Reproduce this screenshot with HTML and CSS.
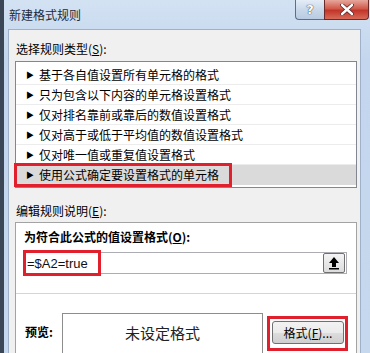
FILE: index.html
```html
<!DOCTYPE html>
<html lang="zh-CN">
<head>
    <meta charset="UTF-8">
    <title>新建格式规则</title>
    <link rel="stylesheet" href="styles.css">
</head>
<body>
    <div class="window">
        <div class="titlebar">
            <span class="title">新建格式规则</span>
            <div class="caption-btns">
                <span class="cap-btn help">?</span>
                <span class="cap-btn close">
                    <svg width="14" height="11" viewBox="0 0 14 11">
                        <path d="M2 1 L12 10 M12 1 L2 10" stroke="#5a2020" stroke-width="4" stroke-linecap="round"/>
                        <path d="M2 1 L12 10 M12 1 L2 10" stroke="#ffffff" stroke-width="2.4" stroke-linecap="round"/>
                    </svg>
                </span>
            </div>
        </div>
        <div class="client">
            <div class="label">选择规则类型(<u>S</u>):</div>
            <ul class="rule-list">
                <li class="rule">基于各自值设置所有单元格的格式</li>
                <li class="rule">只为包含以下内容的单元格设置格式</li>
                <li class="rule">仅对排名靠前或靠后的数值设置格式</li>
                <li class="rule">仅对高于或低于平均值的数值设置格式</li>
                <li class="rule">仅对唯一值或重复值设置格式</li>
                <li class="rule selected">使用公式确定要设置格式的单元格<span class="mark mark-row"></span></li>
            </ul>
            <div class="label label-edit">编辑规则说明(<u>E</u>):</div>
            <div class="desc">
                <div class="desc-title">为符合此公式的值设置格式(<u>O</u>):</div>
                <div class="formula">
                    <span class="formula-text">=$A2=true</span>
                    <span class="mark mark-formula"></span>
                    <span class="collapse-btn">
                        <svg width="12" height="14" viewBox="0 0 12 14">
                            <path d="M6 1 L11 7 L8 7 L8 11 L4 11 L4 7 L1 7 Z" fill="#000"/>
                            <rect x="1" y="12" width="10" height="1.5" fill="#000"/>
                        </svg>
                    </span>
                </div>
                <div class="sep"></div>
                <div class="preview-row">
                    <span class="preview-label">预览:</span>
                    <div class="preview">未设定格式</div>
                    <div class="btn-mark">
                        <button class="btn">格式(<u>F</u>)...</button>
                    </div>
                </div>
            </div>
        </div>
    </div>
</body>
</html>
```

FILE: styles.css
```css
body {
    margin: 0;
    background: #3b4656;
    font-family: "Noto Sans CJK SC", "Noto Sans", sans-serif;
    font-size: 12px;
    color: #000;
}
.window {
    margin-left: 4px;
    height: 353px;
    padding: 0 9px 0 4px;
    background: linear-gradient(to bottom, #d3e2f3, #c3d6ed 60px, #c6d8ee);
    overflow: hidden;
}
.titlebar {
    height: 29px;
    display: flex;
    justify-content: space-between;
}
.title {
    padding-left: 1px;
    line-height: 29px;
    font-size: 12px;
    color: #1e2a3a;
}
.caption-btns {
    display: flex;
    margin-right: -8px;
    height: 20px;
}
.cap-btn {
    display: flex;
    align-items: center;
    justify-content: center;
    height: 19px;
    border: 1px solid #5b6f8a;
    border-top: none;
}
.help {
    width: 28px;
    border-right: none;
    border-radius: 0 0 0 4px;
    background: linear-gradient(to bottom, #e4edf7, #c9d8ea 50%, #b8cbe2);
    font-family: "DejaVu Sans", sans-serif;
    font-size: 13px;
    font-weight: bold;
    color: #fff;
    text-shadow: 0 0 1px #2c3e55, 0 0 1px #2c3e55;
}
.close {
    width: 43px;
    border-color: #6b2a2a;
    border-radius: 0 0 4px 0;
    background: linear-gradient(to bottom, #e6a79c, #d25a4b 45%, #c2352a 55%, #d86b58);
}
.client {
    height: 330px;
    background: #f0f0f0;
    border: 1px solid #9fb1c8;
    border-bottom: none;
    padding: 0 3px 0 6px;
}
.label {
    margin-top: 11px;
    padding-left: 1px;
    line-height: 16px;
}
.label-edit {
    margin-top: 15px;
}
.rule-list {
    list-style: none;
    margin: 4px 0 0;
    padding: 3px 0 2px;
    background: #fff;
    border: 1px solid #82878f;
}
.rule {
    position: relative;
    height: 20px;
    line-height: 19px;
    padding-left: 23px;
    border-bottom: 1px solid #ececec;
    box-sizing: border-box;
}
.rule:last-child {
    border-bottom: none;
}
.rule::before {
    content: "\25B6";
    position: absolute;
    left: 10px;
    font-size: 8px;
    line-height: 19px;
}
.selected {
    background: #dadada;
}
.mark {
    position: absolute;
    border: 3px solid #e0202c;
    box-sizing: border-box;
}
.mark-row {
    left: -2px;
    top: -2px;
    width: 218px;
    height: 24px;
}
.desc {
    margin-top: 3px;
    height: 140px;
    background: #fff;
    border: 1px solid #a3a3a3;
}
.desc-title {
    margin-top: 6px;
    padding-left: 8px;
    font-weight: bold;
    line-height: 16px;
}
.formula {
    position: relative;
    margin: 7px 9px 0 7px;
    height: 22px;
    border: 1px solid #abadb3;
    box-sizing: border-box;
    display: flex;
    align-items: center;
    justify-content: space-between;
}
.formula-text {
    padding-left: 3px;
    font-family: "Liberation Sans", sans-serif;
    font-size: 13px;
    color: #111;
}
.mark-formula {
    left: -1px;
    top: -3px;
    width: 78px;
    height: 26px;
}
.collapse-btn {
    display: flex;
    align-items: center;
    justify-content: center;
    width: 20px;
    height: 18px;
    margin-right: 1px;
    border: 1px solid #707070;
    border-radius: 2px;
    background: linear-gradient(to bottom, #f4f4f4, #dcdcdc);
}
.sep {
    margin-top: 19px;
    height: 1px;
    background: #d5d5d5;
}
.preview-row {
    display: flex;
    align-items: flex-start;
    margin-top: 19px;
    padding-left: 9px;
}
.preview-label {
    width: 37px;
    margin-top: 11px;
    font-weight: bold;
    line-height: 16px;
}
.preview {
    width: 201px;
    height: 70px;
    box-sizing: border-box;
    border: 1px solid #8d8d8d;
    padding-top: 9px;
    text-align: center;
    font-size: 15px;
    line-height: 20px;
    color: #222;
}
.btn-mark {
    margin: 3px 0 0 4px;
    padding: 2px 1px 4px 2px;
    border: 3px solid #e0202c;
}
.btn {
    width: 72px;
    height: 23px;
    padding: 0;
    font-family: inherit;
    font-size: 12px;
    color: #000;
    border: 1px solid #707070;
    border-radius: 3px;
    background: linear-gradient(to bottom, #f2f2f2, #ebebeb 50%, #dddddd 51%, #cfcfcf);
}
```
